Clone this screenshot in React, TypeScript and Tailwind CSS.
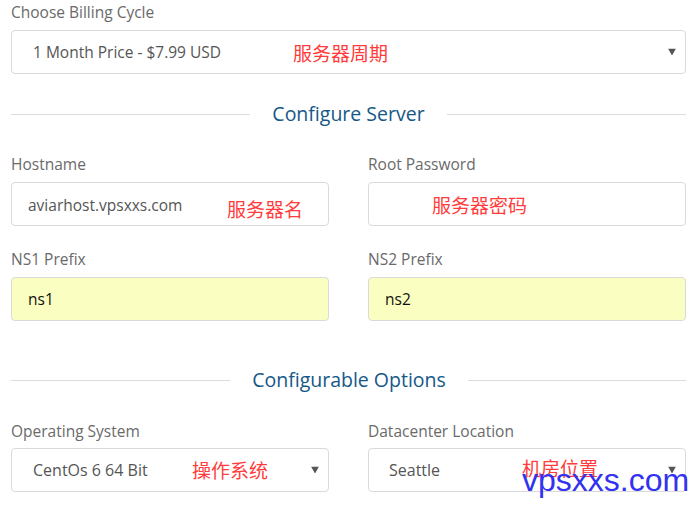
import React from "react";

const font = { fontFamily: "'Open Sans', 'Noto Sans', sans-serif" };
const cjk = { fontFamily: "'Noto Sans CJK SC', sans-serif" };

function Arrow() {
  return (
    <svg className="absolute right-[9px] top-1/2 -translate-y-1/2" width="8" height="7" viewBox="0 0 8 7">
      <path d="M0 0 L8 0 L4 7 Z" fill="#555" />
    </svg>
  );
}

function Note({ text, left }: { text: string; left: string }) {
  return (
    <span className={`absolute top-1/2 -translate-y-1/2 text-[19px] text-[#ff3b3b] ${left}`} style={cjk}>
      {text}
    </span>
  );
}

function Label({ children }: { children: React.ReactNode }) {
  return <div className="text-[15.5px] leading-[20px] text-[#6a6a6a]">{children}</div>;
}

function Heading({ title, left, right }: { title: string; left: string; right: string }) {
  return (
    <div className="flex items-center h-[26px]">
      <div className={`h-px bg-[#dcdcdc] ${left}`} />
      <div className="flex-1 text-center text-[19.5px] text-[#155887] leading-[26px]">{title}</div>
      <div className={`h-px bg-[#dcdcdc] ${right}`} />
    </div>
  );
}

export default function App() {
  return (
    <div className="relative w-[697px] h-[505px] bg-white overflow-hidden px-[11px] pt-[2px]" style={font}>
      <Label>Choose Billing Cycle</Label>
      <div className="relative mt-2 h-[44px] border border-[#dadada] rounded-[4px] flex items-center pl-[21px] pt-[1px] text-[15.5px] text-[#555]">
        1 Month Price - $7.99 USD
        <Note text="服务器周期" left="left-[281px] mt-[1px]" />
        <Arrow />
      </div>

      <div className="mt-[27px]">
        <Heading title="Configure Server" left="w-[239px]" right="w-[239px]" />
      </div>

      <div className="mt-[27px] grid grid-cols-2 gap-x-[39px]">
        <div>
          <Label>Hostname</Label>
          <div className="relative mt-2 h-[44px] border border-[#dadada] rounded-[4px] flex items-center pl-[16px] pt-[3px] text-[15.5px] text-[#555]">
            aviarhost.vpsxxs.com
            <Note text="服务器名" left="left-[215px] mt-[5px]" />
          </div>
        </div>
        <div>
          <Label>Root Password</Label>
          <div className="relative mt-2 h-[44px] border border-[#dadada] rounded-[4px]">
            <Note text="服务器密码" left="left-[63px] mt-[1px]" />
          </div>
        </div>
        <div className="mt-[23px]">
          <Label>NS1 Prefix</Label>
          <div className="mt-2 h-[44px] border border-[#dadada] rounded-[4px] bg-[#fafec0] flex items-center pl-[16px] pt-[2px] text-[15.5px] text-[#111]">
            ns1
          </div>
        </div>
        <div className="mt-[23px]">
          <Label>NS2 Prefix</Label>
          <div className="mt-2 h-[44px] border border-[#dadada] rounded-[4px] bg-[#fafec0] flex items-center pl-[16px] pt-[2px] text-[15.5px] text-[#111]">
            ns2
          </div>
        </div>
      </div>

      <div className="mt-[46px]">
        <Heading title="Configurable Options" left="w-[219px]" right="w-[218px]" />
      </div>

      <div className="mt-[28px] grid grid-cols-2 gap-x-[39px]">
        <div>
          <Label>Operating System</Label>
          <div className="relative mt-[7px] h-[44px] border border-[#dadada] rounded-[4px] flex items-center pl-[21px] text-[16px] text-[#555]">
            CentOs 6 64 Bit
            <Note text="操作系统" left="left-[180px]" />
            <Arrow />
          </div>
        </div>
        <div>
          <Label>Datacenter Location</Label>
          <div className="relative mt-[7px] h-[44px] border border-[#dadada] rounded-[4px] flex items-center pl-[20px] text-[16px] text-[#555]">
            Seattle
            <Note text="机房位置" left="left-[153px] mt-[-2px]" />
            <Arrow />
          </div>
        </div>
      </div>

      <div
        className="absolute left-[522px] top-[462px] text-[32px] leading-[36px] text-[#3232f0]"
        style={{ fontFamily: "'Liberation Sans', Arial, sans-serif" }}
      >
        vpsxxs.com
      </div>
    </div>
  );
}
